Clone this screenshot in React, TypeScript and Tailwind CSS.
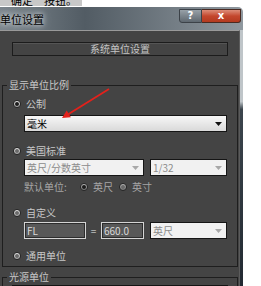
import React from 'react'

const font = "font-['Noto_Sans_CJK_SC','Noto_Sans',sans-serif]"

function Radio({ checked, dim }: { checked?: boolean; dim?: boolean }) {
  return (
    <span
      className={`flex items-center justify-center w-[8px] h-[8px] rounded-full border border-[#262626] shrink-0 ${
        dim ? 'bg-linear-to-b from-[#bdbdbd] to-[#7a7a7a]' : 'bg-linear-to-b from-[#f2f2f2] to-[#a9a9a9]'
      }`}
    >
      <span className={`w-[4px] h-[4px] rounded-full ${checked ? 'bg-[#1b1b1b]' : 'bg-[#6a6a6a]'}`} />
    </span>
  )
}

function Caret({ dark }: { dark?: boolean }) {
  return (
    <svg width="7" height="4" viewBox="0 0 7 4" className="shrink-0">
      <polygon points="0,0 7,0 3.5,4" fill={dark ? '#111' : '#a8a8a8'} />
    </svg>
  )
}

function Select({ label, width, dark }: { label: string; width: string; dark?: boolean }) {
  return (
    <div
      className={`${width} h-[17px] flex items-center justify-between border border-[#151515] pl-[2px] pr-[4px] ${
        dark ? 'bg-linear-to-b from-[#f7f7f7] to-[#d9d9d9] text-black' : 'bg-[#f1f1f1] text-[#8c8c8c]'
      }`}
    >
      <span className="text-[10px] leading-[12px]">{label}</span>
      <Caret dark={dark} />
    </div>
  )
}

function Field({ value, width }: { value: string; width: string }) {
  return (
    <div className={`${width} h-[17px] flex items-center border border-[#d4d4d4] bg-[#585858] pl-[2px] shadow-[inset_0_0_0_1px_#2c2c2c]`}>
      <span className="text-[10px] leading-[12px] text-[#d8d8d8]">{value}</span>
    </div>
  )
}

export default function App() {
  return (
    <div className={`relative w-[261px] h-[286px] bg-white overflow-hidden ${font}`}>
      {/* cropped caption above the dialog */}
      <div className="w-[82px] h-[6px] bg-[#c8c8c8] overflow-hidden">
        <div className="-mt-[5px] pl-[11px] text-[11px] leading-[11px] text-black">确定”按钮。</div>
      </div>

      {/* title bar */}
      <div className="mt-[1px] w-[243px] h-[23px] flex items-start justify-between rounded-tr-[5px] bg-linear-to-r from-[#7b858c] via-[#525c64] via-35% to-[#8f989f]">
        <span className="pt-[7px] text-[11px] leading-[11px] text-black [text-shadow:0_0_5px_#e6eaed,0_0_8px_#c8ced2]">
          单位设置
        </span>
        <div className="flex mt-[2px] mr-[2px]">
          <div className="w-[23px] h-[14px] flex items-center justify-center border border-[#3c4248] rounded-bl-[3px] bg-linear-to-b from-[#98a1a8] to-[#5f6870] text-white text-[10px] font-bold leading-none font-['DejaVu_Sans',sans-serif]">
            ?
          </div>
          <div className="w-[39px] h-[14px] flex items-center justify-center border border-l-0 border-[#4a2a22] rounded-br-[3px] bg-linear-to-b from-[#dc8c78] via-[#c4472d] via-50% to-[#b33a20] text-white text-[10px] font-bold leading-none font-['DejaVu_Sans',sans-serif]">
            x
          </div>
        </div>
      </div>

      {/* dialog body */}
      <div className="flex w-[243px] h-[256px]">
        <div className="w-[240px] bg-[#444444] border-t border-[#9a9a9a] border-r border-r-[#5c5c5c] flex flex-col">
          <div className="mt-[11px] ml-[12px] w-[216px] h-[20px] flex items-center justify-center border border-[#1c1c1c] shadow-[inset_0_1px_0_#555]">
            <span className="text-[10px] leading-[12px] text-[#c4c4c4]">系统单位设置</span>
          </div>

          <fieldset className="mt-[24px] ml-[2px] w-[236px] border border-[#1e1e1e]">
            <legend className="ml-[4px] px-[2px] text-[10px] leading-[10px] text-[#c8c8c8]">显示单位比例</legend>

            <div className="mt-[8px] pl-[10px] h-[12px] flex items-center gap-[5px]">
              <Radio checked />
              <span className="text-[10px] leading-[12px] text-[#c8c8c8]">公制</span>
            </div>
            <div className="mt-[5px] ml-[21px]">
              <Select label="毫米" width="w-[203px]" dark />
            </div>

            <div className="mt-[13px] pl-[10px] h-[12px] flex items-center gap-[5px]">
              <Radio />
              <span className="text-[10px] leading-[12px] text-[#c8c8c8]">美国标准</span>
            </div>
            <div className="mt-[2px] ml-[21px] flex gap-[6px]">
              <Select label="英尺/分数英寸" width="w-[120px]" />
              <Select label="1/32" width="w-[77px]" />
            </div>

            <div className="mt-[5px] ml-[21px] h-[12px] flex items-center text-[10px] leading-[12px] text-[#a6a6a6]">
              <span className="w-[56px]">默认单位:</span>
              <span className="flex items-center gap-[5px]">
                <Radio checked dim />
                <span>英尺</span>
              </span>
              <span className="ml-[6px] flex items-center gap-[5px]">
                <Radio dim />
                <span>英寸</span>
              </span>
            </div>

            <div className="mt-[14px] pl-[10px] h-[12px] flex items-center gap-[5px]">
              <Radio />
              <span className="text-[10px] leading-[12px] text-[#c8c8c8]">自定义</span>
            </div>
            <div className="mt-[3px] ml-[21px] flex items-center">
              <Field value="FL" width="w-[62px]" />
              <span className="w-[15px] text-center text-[10px] leading-[12px] text-[#bdbdbd]">=</span>
              <Field value="660.0" width="w-[43px]" />
              <div className="ml-[6px]">
                <Select label="英尺" width="w-[77px]" />
              </div>
            </div>

            <div className="mt-[11px] mb-[4px] pl-[10px] h-[12px] flex items-center gap-[5px]">
              <Radio />
              <span className="text-[10px] leading-[12px] text-[#c8c8c8]">通用单位</span>
            </div>
          </fieldset>

          <fieldset className="mt-[5px] ml-[2px] w-[236px] border border-[#1e1e1e] h-[30px]">
            <legend className="ml-[4px] px-[2px] text-[10px] leading-[10px] text-[#c8c8c8]">光源单位</legend>
            <div className="mt-[3px] ml-[9px] w-[216px] h-[20px] border-t border-[#141414]" />
          </fieldset>
        </div>
        <div className="w-[3px] bg-linear-to-b from-[#bfc5c9] from-28% via-[#3c454d] via-31% to-[#222a32]" />
      </div>

      {/* red annotation arrow */}
      <svg className="absolute left-0 top-0 pointer-events-none" width="261" height="286" viewBox="0 0 261 286">
        <line x1="109" y1="89" x2="67" y2="115" stroke="#e3211b" strokeWidth="1.8" />
        <polygon points="62,118 70.9,117.2 66.7,110.4" fill="#e3211b" />
      </svg>
    </div>
  )
}
